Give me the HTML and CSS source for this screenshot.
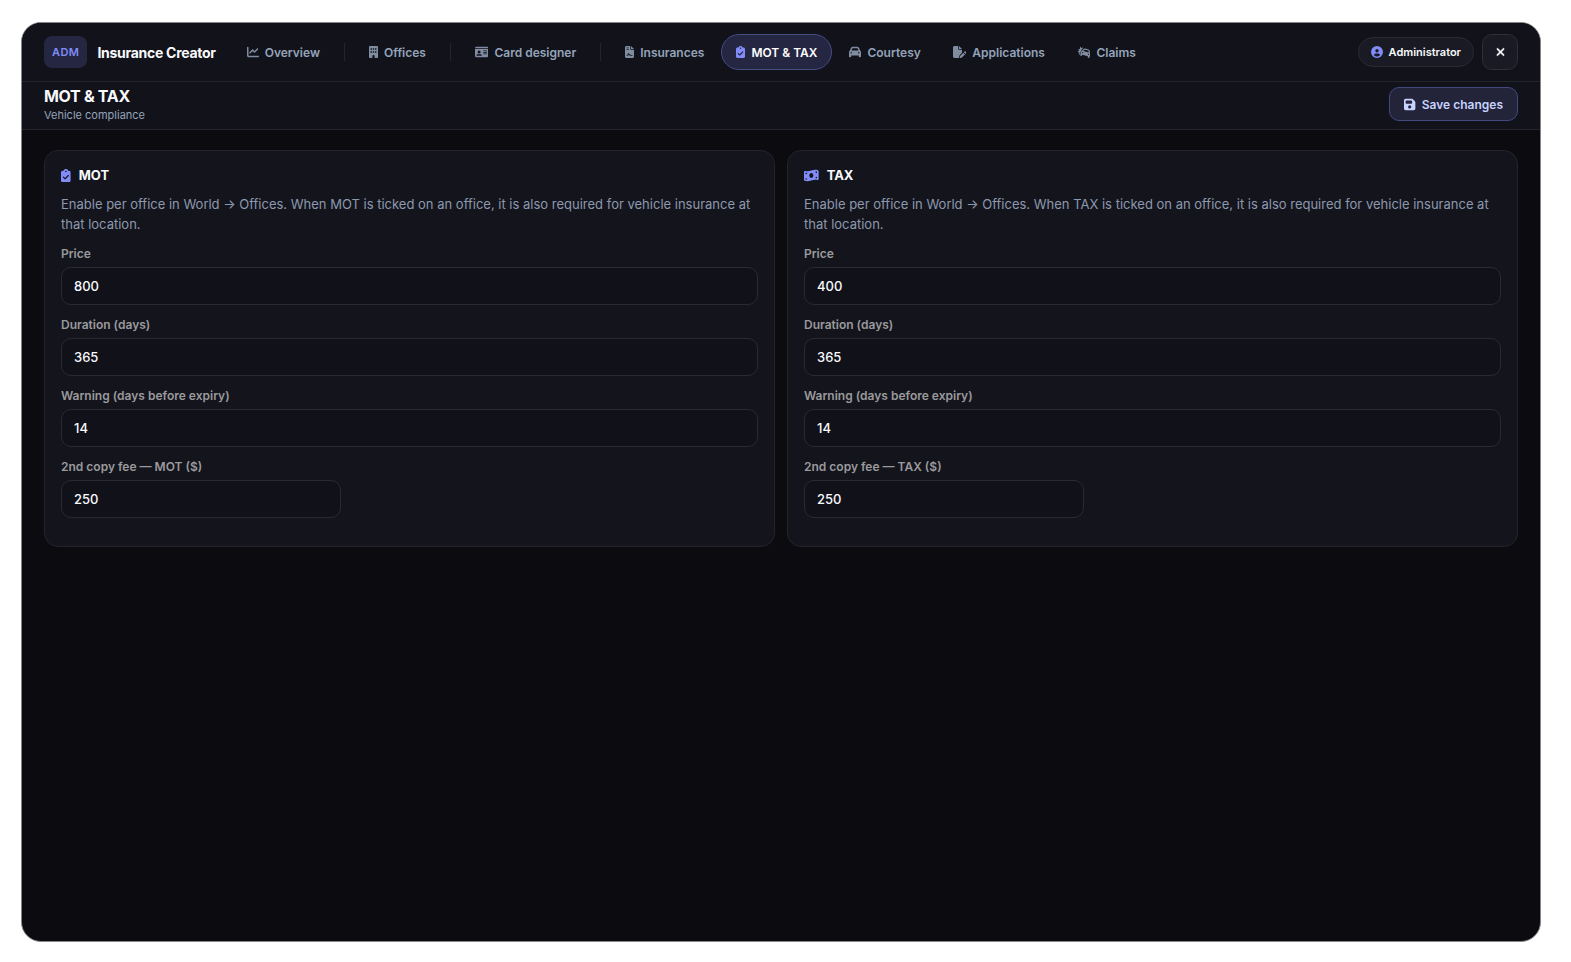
FILE: index.html
```html
<!DOCTYPE html>
<html lang="en">
<head>
    <meta charset="UTF-8">
    <meta name="viewport" content="width=device-width, initial-scale=1.0">
    <title>Insurance Creator - MOT &amp; TAX</title>
    <link rel="stylesheet" href="styles.css">
</head>
<body>

<!-- Icons used more than once -->
<svg class="sprite" aria-hidden="true">
    <symbol id="icon-clipboard" viewBox="0 0 384 512">
        <path d="M192 0c-41.8 0-77.4 26.7-90.5 64H64C28.7 64 0 92.7 0 128V448c0 35.3 28.7 64 64 64H320c35.3 0 64-28.7 64-64V128c0-35.3-28.7-64-64-64H282.5C269.4 26.7 233.8 0 192 0zm0 64a32 32 0 1 1 0 64 32 32 0 1 1 0-64zM305 273L177 401c-9.4 9.4-24.6 9.4-33.9 0L79 337c-9.4-9.4-9.4-24.6 0-33.9s24.6-9.4 33.9 0l47 47L271 239c9.4-9.4 24.6-9.4 33.9 0s9.4 24.6 0 33.9z"/>
    </symbol>
</svg>

<div class="app">
    <header class="topbar">
        <span class="badge">ADM</span>
        <span class="brand">Insurance Creator</span>

        <nav class="nav">
            <a href="#overview" class="nav-link">
                <svg class="icon" viewBox="0 0 512 512"><path d="M64 64c0-17.7-14.3-32-32-32S0 46.3 0 64V400c0 44.2 35.8 80 80 80H480c17.7 0 32-14.3 32-32s-14.3-32-32-32H80c-8.8 0-16-7.2-16-16V64zm406.6 86.6c12.5-12.5 12.5-32.8 0-45.3s-32.8-12.5-45.3 0L320 210.7l-57.4-57.4c-12.5-12.5-32.8-12.5-45.3 0l-112 112c-12.5 12.5-12.5 32.8 0 45.3s32.8 12.5 45.3 0L240 221.3l57.4 57.4c12.5 12.5 32.8 12.5 45.3 0l128-128z"/></svg>
                Overview
            </a>
            <span class="divider"></span>
            <a href="#offices" class="nav-link">
                <svg class="icon" viewBox="0 0 384 512"><path d="M48 0C21.5 0 0 21.5 0 48V464c0 26.5 21.5 48 48 48h96V432c0-26.5 21.5-48 48-48s48 21.5 48 48v80h96c26.5 0 48-21.5 48-48V48c0-26.5-21.5-48-48-48H48zM64 240c0-8.8 7.2-16 16-16h32c8.8 0 16 7.2 16 16v32c0 8.8-7.2 16-16 16H80c-8.8 0-16-7.2-16-16V240zm112-16h32c8.8 0 16 7.2 16 16v32c0 8.8-7.2 16-16 16H176c-8.8 0-16-7.2-16-16V240c0-8.8 7.2-16 16-16zm80 16c0-8.8 7.2-16 16-16h32c8.8 0 16 7.2 16 16v32c0 8.8-7.2 16-16 16H272c-8.8 0-16-7.2-16-16V240zM80 96h32c8.8 0 16 7.2 16 16v32c0 8.8-7.2 16-16 16H80c-8.8 0-16-7.2-16-16V112c0-8.8 7.2-16 16-16zm80 16c0-8.8 7.2-16 16-16h32c8.8 0 16 7.2 16 16v32c0 8.8-7.2 16-16 16H176c-8.8 0-16-7.2-16-16V112zM272 96h32c8.8 0 16 7.2 16 16v32c0 8.8-7.2 16-16 16H272c-8.8 0-16-7.2-16-16V112c0-8.8 7.2-16 16-16z"/></svg>
                Offices
            </a>
            <span class="divider"></span>
            <a href="#cards" class="nav-link">
                <svg class="icon" viewBox="0 0 576 512"><path d="M0 96l576 0c0-35.3-28.7-64-64-64H64C28.7 32 0 60.7 0 96zm0 32V416c0 35.3 28.7 64 64 64H512c35.3 0 64-28.7 64-64V128H0zM64 405.3c0-29.5 23.9-53.3 53.3-53.3H234.7c29.5 0 53.3 23.9 53.3 53.3c0 5.9-4.8 10.7-10.7 10.7H74.7c-5.9 0-10.7-4.8-10.7-10.7zM176 192a64 64 0 1 1 0 128 64 64 0 1 1 0-128zm176 16c0-8.8 7.2-16 16-16H496c8.8 0 16 7.2 16 16s-7.2 16-16 16H368c-8.8 0-16-7.2-16-16zm0 64c0-8.8 7.2-16 16-16H496c8.8 0 16 7.2 16 16s-7.2 16-16 16H368c-8.8 0-16-7.2-16-16zm0 64c0-8.8 7.2-16 16-16H496c8.8 0 16 7.2 16 16s-7.2 16-16 16H368c-8.8 0-16-7.2-16-16z"/></svg>
                Card designer
            </a>
            <span class="divider"></span>
            <a href="#insurances" class="nav-link">
                <svg class="icon" viewBox="0 0 384 512"><path d="M64 0C28.7 0 0 28.7 0 64V448c0 35.3 28.7 64 64 64H320c35.3 0 64-28.7 64-64V160H256c-17.7 0-32-14.3-32-32V0H64zM256 0V128H384L256 0zM80 64h64c8.8 0 16 7.2 16 16s-7.2 16-16 16H80c-8.8 0-16-7.2-16-16s7.2-16 16-16zm0 64h64c8.8 0 16 7.2 16 16s-7.2 16-16 16H80c-8.8 0-16-7.2-16-16s7.2-16 16-16zm54.2 253.8c-6.1 20.3-24.8 34.2-46 34.2H80c-8.8 0-16-7.2-16-16s7.2-16 16-16h8.2c7.1 0 13.3-4.6 15.3-11.4l14.9-49.5c3.4-11.3 13.8-19.1 25.6-19.1s22.2 7.7 25.6 19.1l11.6 38.6c7.4-6.2 16.8-9.7 26.8-9.7c15.9 0 30.4 9 37.5 23.2l4.4 8.8H304c8.8 0 16 7.2 16 16s-7.2 16-16 16H240c-6.1 0-11.6-3.4-14.3-8.8l-8.8-17.7c-1.7-3.4-5.1-5.5-8.8-5.5s-7.2 2.1-8.8 5.5l-8.8 17.7c-2.9 5.9-9.2 9.4-15.7 8.8s-12.1-5.1-13.9-11.3L144 349l-9.8 32.8z"/></svg>
                Insurances
            </a>
            <a href="#mot-tax" class="nav-link active" aria-current="page">
                <svg class="icon" viewBox="0 0 384 512"><use href="#icon-clipboard"/></svg>
                MOT &amp; TAX
            </a>
            <a href="#courtesy" class="nav-link">
                <svg class="icon" viewBox="0 0 512 512"><path d="M135.2 117.4L109.1 192H402.9l-26.1-74.6C372.3 104.6 360.2 96 346.6 96H165.4c-13.6 0-25.7 8.6-30.2 21.4zM39.6 196.8L74.8 96.3C88.3 57.8 124.6 32 165.4 32H346.6c40.8 0 77.1 25.8 90.6 64.3l35.2 100.5c23.2 9.6 39.6 32.5 39.6 59.2V400v48c0 17.7-14.3 32-32 32H448c-17.7 0-32-14.3-32-32V400H96v48c0 17.7-14.3 32-32 32H32c-17.7 0-32-14.3-32-32V400 256c0-26.7 16.4-49.6 39.6-59.2zM128 288a32 32 0 1 0 -64 0 32 32 0 1 0 64 0zm288 32a32 32 0 1 0 0-64 32 32 0 1 0 0 64z"/></svg>
                Courtesy
            </a>
            <a href="#applications" class="nav-link">
                <svg class="icon" viewBox="0 0 576 512"><path d="M0 64C0 28.7 28.7 0 64 0H224V128c0 17.7 14.3 32 32 32H384V285.7l-86.8 86.8c-10.3 10.3-17.5 23.1-21 37.2l-18.7 74.9c-2.3 9.2-1.8 18.8 1.3 27.5H64c-35.3 0-64-28.7-64-64V64zm384 64H256V0L384 128zM549.8 235.7l14.4 14.4c15.6 15.6 15.6 40.9 0 56.6l-29.4 29.4-71-71 29.4-29.4c15.6-15.6 40.9-15.6 56.6 0zM311.9 417L441.1 287.8l71 71L382.9 487.9c-4.1 4.1-9.2 7-14.9 8.4l-60.1 15c-5.5 1.4-11.2-.2-15.2-4.2s-5.6-9.7-4.2-15.2l15-60.1c1.4-5.6 4.3-10.8 8.4-14.9z"/></svg>
                Applications
            </a>
            <a href="#claims" class="nav-link">
                <svg class="icon" viewBox="0 0 576 512">
                    <path d="M150 30l32 58 66-20c10-2 16 6 12 16l-12 24c-30 4-50 26-58 60l-16 60c-24 18-36 44-38 76l-8 52-38 12c-10 2-16-6-12-16l24-66-68-26c-12-6-12-20 0-26l60-28-38-66c-4-10 2-18 12-16l56 16 8-102c2-12 14-14 18-8z"/>
                    <path transform="translate(226 50) rotate(15) scale(.8 .78)" d="M135.2 117.4L109.1 192H402.9l-26.1-74.6C372.3 104.6 360.2 96 346.6 96H165.4c-13.6 0-25.7 8.6-30.2 21.4zM39.6 196.8L74.8 96.3C88.3 57.8 124.6 32 165.4 32H346.6c40.8 0 77.1 25.8 90.6 64.3l35.2 100.5c23.2 9.6 39.6 32.5 39.6 59.2V400v48c0 17.7-14.3 32-32 32H448c-17.7 0-32-14.3-32-32V400H96v48c0 17.7-14.3 32-32 32H32c-17.7 0-32-14.3-32-32V400 256c0-26.7 16.4-49.6 39.6-59.2zM128 288a32 32 0 1 0 -64 0 32 32 0 1 0 64 0zm288 32a32 32 0 1 0 0-64 32 32 0 1 0 0 64z"/>
                </svg>
                Claims
            </a>
        </nav>

        <div class="user">
            <span class="user-chip">
                <svg class="icon" viewBox="0 0 512 512"><path d="M399 384.2C376.9 345.8 335.4 320 288 320H224c-47.4 0-88.9 25.8-111 64.2c35.2 39.2 86.2 63.8 143 63.8s107.8-24.7 143-63.8zM0 256a256 256 0 1 1 512 0A256 256 0 1 1 0 256zm256 16a72 72 0 1 0 0-144 72 72 0 1 0 0 144z"/></svg>
                Administrator
            </span>
            <button type="button" class="close-btn" aria-label="Close">
                <svg class="icon" viewBox="0 0 384 512"><path d="M342.6 150.6c12.5-12.5 12.5-32.8 0-45.3s-32.8-12.5-45.3 0L192 210.7 86.6 105.4c-12.5-12.5-32.8-12.5-45.3 0s-12.5 32.8 0 45.3L146.7 256 41.4 361.4c-12.5 12.5-12.5 32.8 0 45.3s32.8 12.5 45.3 0L192 301.3 297.4 406.6c12.5 12.5 32.8 12.5 45.3 0s12.5-32.8 0-45.3L237.3 256 342.6 150.6z"/></svg>
            </button>
        </div>
    </header>

    <div class="page-head">
        <div>
            <h1>MOT &amp; TAX</h1>
            <p class="subtitle">Vehicle compliance</p>
        </div>
        <button type="submit" form="compliance" class="save-btn">
            <svg class="icon" viewBox="0 0 448 512"><path d="M64 32C28.7 32 0 60.7 0 96V416c0 35.3 28.7 64 64 64H384c35.3 0 64-28.7 64-64V173.3c0-17-6.7-33.3-18.7-45.3L352 50.7C340 38.7 323.7 32 306.7 32H64zm0 96c0-17.7 14.3-32 32-32H288c17.7 0 32 14.3 32 32v64c0 17.7-14.3 32-32 32H96c-17.7 0-32-14.3-32-32V128zM224 288a64 64 0 1 1 0 128 64 64 0 1 1 0-128z"/></svg>
            Save changes
        </button>
    </div>

    <form id="compliance" class="cards">
        <section class="card">
            <h2>
                <svg class="icon" viewBox="0 0 384 512"><use href="#icon-clipboard"/></svg>
                MOT
            </h2>
            <p class="hint">Enable per office in World → Offices. When MOT is ticked on an office, it is also required for vehicle insurance at that location.</p>
            <div class="field">
                <label for="mot-price">Price</label>
                <input type="text" inputmode="numeric" id="mot-price" value="800">
            </div>
            <div class="field">
                <label for="mot-duration">Duration (days)</label>
                <input type="text" inputmode="numeric" id="mot-duration" value="365">
            </div>
            <div class="field">
                <label for="mot-warning">Warning (days before expiry)</label>
                <input type="text" inputmode="numeric" id="mot-warning" value="14">
            </div>
            <div class="field narrow">
                <label for="mot-copy">2nd copy fee — MOT ($)</label>
                <input type="text" inputmode="numeric" id="mot-copy" value="250">
            </div>
        </section>

        <section class="card">
            <h2>
                <svg class="icon" viewBox="0 0 576 512"><path d="M0 112.5V422.3c0 18 10.1 35 27 41.3c87 32.5 174 10.3 261-11.9c79.8-20.3 159.6-40.7 239.3-18.9c23 6.3 48.7-9.5 48.7-33.4V89.7c0-18-10.1-35-27-41.3C462 15.9 375 38.1 288 60.3C208.2 80.6 128.4 100.9 48.7 79.1C25.6 72.8 0 88.6 0 112.5zM288 352c-44.2 0-80-43-80-96s35.8-96 80-96s80 43 80 96s-35.8 96-80 96zM64 352c35.3 0 64 28.7 64 64H64V352zm64-208c0 35.3-28.7 64-64 64V144h64zM512 304v64H448c0-35.3 28.7-64 64-64zM448 96h64v64c-35.3 0-64-28.7-64-64z"/></svg>
                TAX
            </h2>
            <p class="hint">Enable per office in World → Offices. When TAX is ticked on an office, it is also required for vehicle insurance at that location.</p>
            <div class="field">
                <label for="tax-price">Price</label>
                <input type="text" inputmode="numeric" id="tax-price" value="400">
            </div>
            <div class="field">
                <label for="tax-duration">Duration (days)</label>
                <input type="text" inputmode="numeric" id="tax-duration" value="365">
            </div>
            <div class="field">
                <label for="tax-warning">Warning (days before expiry)</label>
                <input type="text" inputmode="numeric" id="tax-warning" value="14">
            </div>
            <div class="field narrow">
                <label for="tax-copy">2nd copy fee — TAX ($)</label>
                <input type="text" inputmode="numeric" id="tax-copy" value="250">
            </div>
        </section>
    </form>
</div>

</body>
</html>
```
FILE: styles.css
```css
* {
    box-sizing: border-box;
}
body {
    display: flex;
    min-height: 100vh;
    margin: 0;
    padding: 22px 30px 20px 21px;
    background-color: #fff;
    color: #f8fafc;
    font-family: Inter, "Liberation Sans", sans-serif;
    font-size: 13px;
}
h1, h2, p {
    margin: 0;
}
button, input {
    font-family: inherit;
}
.sprite {
    display: none;
}
.icon {
    flex: none;
    height: 12px;
    fill: currentColor;
}
.app {
    flex: 1;
    min-width: 0;
    border: 1px solid #85858a;
    border-radius: 20px;
    background-color: #0b0b10;
    overflow: hidden;
}

/* Top bar */
.topbar {
    display: flex;
    align-items: center;
    padding: 11px 22px;
    border-bottom: 1px solid #24242d;
    background-color: #12121b;
}
.badge {
    padding: 0 8px;
    border-radius: 8px;
    background-color: #252641;
    color: #818cf8;
    font-size: 11px;
    font-weight: 600;
    line-height: 32px;
    letter-spacing: 0.04em;
}
.brand {
    margin-left: 10px;
    font-size: 14px;
    font-weight: 700;
    letter-spacing: -0.02em;
    white-space: nowrap;
}
.nav {
    display: flex;
    align-items: center;
    gap: 2px;
    margin-left: 16px;
}
.nav-link {
    display: flex;
    align-items: center;
    gap: 6px;
    height: 36px;
    padding: 0 14px;
    border: 1px solid transparent;
    border-radius: 18px;
    color: #94a3b8;
    font-size: 12px;
    font-weight: 600;
    text-decoration: none;
    white-space: nowrap;
}
.nav-link .icon {
    opacity: 0.85;
}
.nav-link.active {
    border-color: #454c86;
    background-color: #252641;
    color: #fff;
}
.nav-link.active .icon {
    color: #818cf8;
    opacity: 1;
}
.divider {
    width: 1px;
    height: 18px;
    margin: 0 7px;
    background-color: #24242d;
}
.user {
    display: flex;
    align-items: center;
    gap: 8px;
    margin-left: auto;
}
.user-chip {
    display: flex;
    align-items: center;
    gap: 6px;
    height: 30px;
    padding: 0 12px;
    border: 1px solid #2a2a34;
    border-radius: 15px;
    background-color: #1a1a24;
    font-size: 11px;
    font-weight: 600;
}
.user-chip .icon {
    color: #818cf8;
}
.close-btn {
    display: flex;
    align-items: center;
    justify-content: center;
    width: 36px;
    height: 36px;
    padding: 0;
    border: 1px solid #2f2f39;
    border-radius: 10px;
    background-color: #1a1a24;
    color: #f8fafc;
    cursor: pointer;
}
.close-btn .icon {
    stroke: currentColor;
    stroke-width: 16;
}

/* Page heading */
.page-head {
    display: flex;
    align-items: flex-start;
    justify-content: space-between;
    padding: 5px 22px;
    border-bottom: 1px solid #24242d;
    background-color: #12121b;
}
h1 {
    font-size: 16px;
    font-weight: 700;
    line-height: 19px;
    letter-spacing: -0.02em;
}
.subtitle {
    color: #94a3b8;
    font-size: 11px;
    line-height: 18px;
}
.save-btn {
    display: flex;
    align-items: center;
    gap: 6px;
    height: 34px;
    padding: 0 14px;
    border: 1px solid #434a82;
    border-radius: 10px;
    background-color: #23233a;
    color: #c7d2fe;
    font-size: 12px;
    font-weight: 600;
    cursor: pointer;
}
.save-btn .icon {
    height: 13px;
}

/* Settings cards */
.cards {
    display: grid;
    grid-template-columns: 1fr 1fr;
    gap: 12px;
    padding: 20px 22px;
}
.card {
    padding: 16px;
    border: 1px solid #24242d;
    border-radius: 14px;
    background-color: #14141d;
}
h2 {
    display: flex;
    align-items: center;
    gap: 8px;
    margin-bottom: 10px;
    font-size: 13px;
    font-weight: 700;
    line-height: 17px;
}
h2 .icon {
    height: 13px;
    color: #818cf8;
}
.hint {
    margin-bottom: 12px;
    color: #8c99ad;
    font-size: 13px;
    line-height: 20px;
}
.field {
    margin-bottom: 12px;
}
.field label {
    display: block;
    margin-bottom: 6px;
    color: #9a9a9c;
    font-size: 12px;
    font-weight: 600;
    line-height: 15px;
}
.field input {
    display: block;
    width: 100%;
    height: 38px;
    padding: 0 12px;
    border: 1px solid #2a2a33;
    border-radius: 10px;
    background-color: #11111a;
    color: #f8fafc;
    font-size: 13px;
    font-weight: 500;
}
.narrow {
    max-width: 280px;
}
```
